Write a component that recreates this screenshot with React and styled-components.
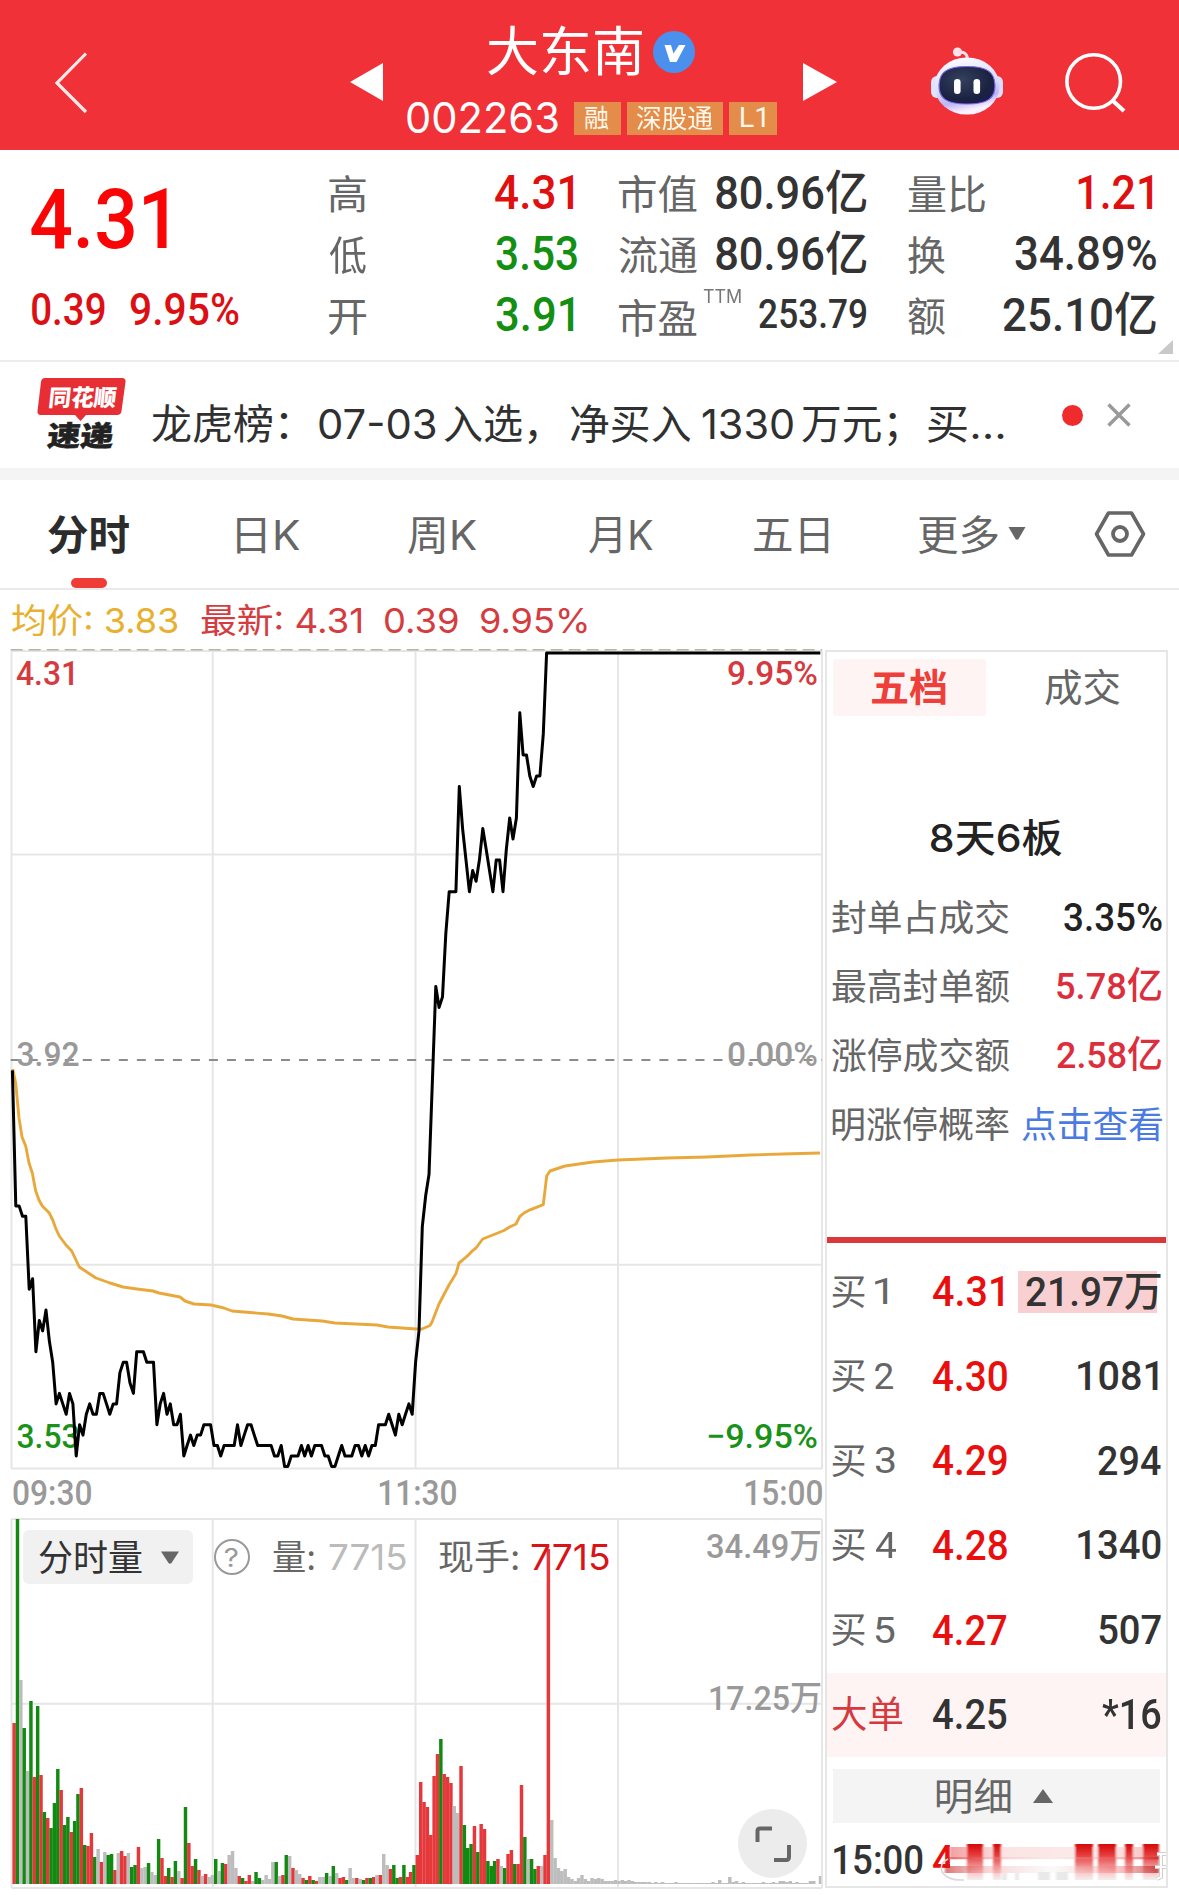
import React from "react";
import styled, { createGlobalStyle, css } from "styled-components";

const DIN = 'Roboto, "Noto Sans CJK SC", sans-serif';
const SANS = 'Inter, "Noto Sans CJK SC", sans-serif';

const GlobalStyle = createGlobalStyle`
  * { box-sizing: border-box; }
  body { margin: 0; background: #fff; font-family: ${SANS}; color: #333; }
  svg { display: block; flex: none; overflow: visible; }
`;

/* ---------- text that is set to an exact ink width ---------- */

const FitBox = styled.div`
  flex: none;
  width: ${(p) => p.$w}px;
  height: ${(p) => Math.round(p.$size * 1.2)}px;
  margin: ${(p) => p.$m || "0"};
  line-height: ${(p) => Math.round(p.$size * 1.2)}px;
  font-family: ${(p) => (p.$din ? DIN : SANS)};
  font-size: ${(p) => p.$size}px;
  font-weight: ${(p) => p.$weight};
  color: ${(p) => p.$color};
  white-space: nowrap;
`;

const FitInk = styled.span`
  display: inline-block;
  transform-origin: 0 50%;
`;

let context;
function inkOf(text, font) {
  if (!context) context = document.createElement("canvas").getContext("2d");
  context.font = font;
  const m = context.measureText(text);
  return { left: m.actualBoundingBoxLeft, width: m.actualBoundingBoxLeft + m.actualBoundingBoxRight };
}

function Fit({ w, size, weight = 400, color = "#333", din, m, children }) {
  const ink = inkOf(children, `${weight} ${size}px ${din ? DIN : SANS}`);
  const k = w / ink.width;
  return (
    <FitBox $w={w} $size={size} $weight={weight} $color={color} $din={din} $m={m}>
      <FitInk style={{ transform: `translateX(${ink.left * k}px) scaleX(${k})` }}>{children}</FitInk>
    </FitBox>
  );
}

/* ---------- header ---------- */

const Page = styled.div`
  width: 1179px;
  height: 1895px;
  overflow: hidden;
  background: #fff;
`;

const Header = styled.header`
  display: flex;
  align-items: center;
  height: 150px;
  padding: 14px 0 0 54px;
  background: #f03137;
`;

const PrevArrow = styled.svg` margin-left: 262px; `;
const NextArrow = styled.svg` margin-left: 26px; `;
const Robot = styled.svg` margin-left: 93px; `;
const SearchIcon = styled.svg` margin-left: 61px; `;

const StockTitle = styled.div`
  display: flex;
  flex-direction: column;
  align-self: flex-start;
  width: 370px;
  margin-left: 24px;
  padding-top: 6px;
`;

const NameRow = styled.div`
  display: flex;
  align-items: center;
  height: 64px;
  margin-left: 81px;
  gap: 11px;
`;

const CodeRow = styled.div`
  display: flex;
  align-items: center;
  height: 68px;
`;

const Tag = styled.div`
  display: flex;
  align-items: center;
  justify-content: center;
  width: ${(p) => p.$w}px;
  height: 33px;
  margin-left: ${(p) => p.$ml}px;
  background: #e48c49;
`;

function TopBar() {
  return (
    <Header>
      <svg width="34" height="60" viewBox="0 0 34 60">
        <polyline points="32,1.5 3,31 32,60" fill="none" stroke="#ffe9e9" strokeWidth="3.2" />
      </svg>
      <PrevArrow width="33" height="38" viewBox="0 0 33 38">
        <path d="M33 0V38L0 19Z" fill="#fff" />
      </PrevArrow>
      <StockTitle>
        <NameRow>
          <Fit w={154} size={53} color="#fff">大东南</Fit>
          <svg width="42" height="42" viewBox="0 0 42 42">
            <circle cx="21" cy="21" r="21" fill="#4b90ec" />
            <path d="M11.500 14H18L20.500 22.500L26 14H32.500L23.500 31H17Z" fill="#fff" />
          </svg>
        </NameRow>
        <CodeRow>
          <Fit w={151} size={42} color="#fff">002263</Fit>
          <Tag $w={47} $ml={15.5}><Fit w={24} size={25} color="#fff7ea">融</Fit></Tag>
          <Tag $w={96} $ml={6}><Fit w={77} size={26} color="#fff7ea">深股通</Fit></Tag>
          <Tag $w={48} $ml={6}><Fit w={24} size={27} color="#fff7ea" din>L1</Fit></Tag>
        </CodeRow>
      </StockTitle>
      <NextArrow width="34" height="38" viewBox="0 0 34 38">
        <path d="M0 0V38L34 19Z" fill="#fff" />
      </NextArrow>
      <Robot width="74" height="70" viewBox="0 0 74 70">
        <defs>
          <linearGradient id="shell" x1="0" y1="0" x2="0.25" y2="1">
            <stop offset="0" stopColor="#ffffff" />
            <stop offset="0.6" stopColor="#d9dcff" />
            <stop offset="0.82" stopColor="#bcb4f6" />
            <stop offset="1" stopColor="#fbf3ff" />
          </linearGradient>
          <radialGradient id="visor" cx="0.4" cy="0.35" r="0.75">
            <stop offset="0" stopColor="#34405f" />
            <stop offset="0.7" stopColor="#1a2240" />
            <stop offset="1" stopColor="#1b1b55" />
          </radialGradient>
        </defs>
        <circle cx="27.5" cy="5" r="4.6" fill="#ffe3ea" />
        <path d="M28 6C33 4 37 6 37.5 12" fill="none" stroke="#ffdfe8" strokeWidth="3" />
        <rect x="1" y="29" width="12" height="22" rx="6" fill="#dfe3fb" />
        <rect x="61" y="29" width="12" height="22" rx="6" fill="#dcdcfb" />
        <ellipse cx="37" cy="39" rx="32.5" ry="28.6" fill="url(#shell)" />
        <path d="M37 19.5C57 19.5 64.5 25 65 38C65.500 51 58 57 37 57C16 57 8.500 51 9 38C9.500 25 17 19.500 37 19.500Z" fill="url(#visor)" stroke="#7b6ce8" strokeWidth="1.2" />
        <rect x="24" y="32" width="6.6" height="15" rx="3.300" fill="#fff" />
        <rect x="43.500" y="32" width="6.600" height="15" rx="3.300" fill="#fff" />
      </Robot>
      <SearchIcon width="62" height="60" viewBox="0 0 62 60">
        <circle cx="28.700" cy="29.500" r="26.800" fill="none" stroke="#fff" strokeWidth="3.600" />
        <path d="M47 48L59 59" stroke="#fff" strokeWidth="4.200" />
      </SearchIcon>
    </Header>
  );
}

/* ---------- quote summary ---------- */

const Quote = styled.section`
  display: flex;
  position: relative;
  height: 212px;
  padding: 12px 0 0 31px;
  border-bottom: 2px solid #ececec;
`;

const PriceBlock = styled.div`
  display: flex;
  flex: none;
  flex-direction: column;
  width: 298px;
  padding-top: 7px;
`;

const ChangeRow = styled.div`
  display: flex;
  gap: 25px;
  margin: 15px 0 0 1px;
`;

const StatColumn = styled.div`
  display: grid;
  flex: none;
  grid-template-rows: repeat(3, 61.3px);
  align-content: start;
  width: 248px;
  margin-right: 41.500px;
  &:last-of-type { margin-right: 0; }
`;

const Stat = styled.div`
  display: flex;
  align-items: center;
  justify-content: space-between;
`;

const Corner = styled.svg`
  position: absolute;
  right: 6px;
  bottom: 6px;
`;

const LABEL = "#666";
const DROP = "4px 0 0 0";

function Summary() {
  return (
    <Quote>
      <PriceBlock>
        <Fit w={136} size={84} weight={500} color="#fa0505" din>4.31</Fit>
        <ChangeRow>
          <Fit w={73} size={43.5} weight={500} color="#dc1014" din>0.39</Fit>
          <Fit w={109} size={43.5} weight={500} color="#dc1014" din>9.95%</Fit>
        </ChangeRow>
      </PriceBlock>
      <StatColumn>
        <Stat><Fit w={37} size={40} color={LABEL} m={DROP}>高</Fit><Fit w={78} size={48} weight={500} color="#e01010" din m="0 4px 0 0">4.31</Fit></Stat>
        <Stat><Fit w={37} size={40} color={LABEL} m={DROP}>低</Fit><Fit w={81} size={48} weight={500} color="#138f13" din>3.53</Fit></Stat>
        <Stat><Fit w={37} size={40} color={LABEL} m={DROP}>开</Fit><Fit w={77} size={48} weight={500} color="#138f13" din m="0 4px 0 0">3.91</Fit></Stat>
      </StatColumn>
      <StatColumn>
        <Stat><Fit w={78} size={40} color={LABEL} m={DROP}>市值</Fit><Fit w={150.5} size={47} weight={500} din>80.96亿</Fit></Stat>
        <Stat><Fit w={78} size={40} color={LABEL} m={DROP}>流通</Fit><Fit w={150.5} size={47} weight={500} din>80.96亿</Fit></Stat>
        <Stat>
          <Fit w={78} size={40} color={LABEL} m="8px 0 0 0">市盈</Fit>
          <Fit w={38} size={18} color="#777" m="-36px 12px 0 0">TTM</Fit>
          <Fit w={107.5} size={40} weight={500} din>253.79</Fit>
        </Stat>
      </StatColumn>
      <StatColumn>
        <Stat><Fit w={77} size={40} color={LABEL} m={DROP}>量比</Fit><Fit w={74} size={48} weight={500} color="#e01010" din m="0 4px 0 0">1.21</Fit></Stat>
        <Stat><Fit w={37} size={40} color={LABEL} m={DROP}>换</Fit><Fit w={141.5} size={48} weight={500} din>34.89%</Fit></Stat>
        <Stat><Fit w={37} size={40} color={LABEL} m={DROP}>额</Fit><Fit w={153} size={47} weight={500} din>25.10亿</Fit></Stat>
      </StatColumn>
      <Corner width="15" height="14" viewBox="0 0 15 14"><path d="M15 0V14H0Z" fill="#c9c9c9" /></Corner>
    </Quote>
  );
}

/* ---------- news strip ---------- */

const News = styled.section`
  display: flex;
  align-items: center;
  height: 118px;
  padding-left: 36px;
  border-bottom: 12px solid #f4f4f4;
`;

const Headline = styled.div`
  display: flex;
  width: 852px;
  margin: 18px 0 0 24px;
`;

const Dot = styled.span`
  width: 21px;
  height: 21px;
  margin: 0 0 0 58px;
  border-radius: 50%;
  background: #f02b2d;
`;

const CloseIcon = styled.svg` margin: 0 0 0 24px; `;

function NewsStrip() {
  const ink = "#303030";
  return (
    <News>
      <svg width="92" height="80" viewBox="0 0 92 80">
        <path d="M9 3H86Q90 3 89.500 7L85.500 36Q85 40 81 40H50L44.500 46L39 40H5Q1 40 1.500 36L5 7Q5.500 3 9 3Z" fill="#e62e34" />
        <text x="15" y="31" transform="skewX(-6)" fontFamily={SANS} fontWeight="900" fontSize="23" fill="#fff" textLength="68" lengthAdjust="spacingAndGlyphs">同花顺</text>
        <text x="18" y="71" transform="skewX(-6)" fontFamily={SANS} fontWeight="900" fontSize="28" fill="#222" stroke="#222" strokeWidth="0.500" textLength="66" lengthAdjust="spacingAndGlyphs">速递</text>
      </svg>
      <Headline>
        <Fit w={136} size={40.5} color={ink}>龙虎榜：</Fit>
        <Fit w={116.5} size={40.5} color={ink} m="0 0 0 31px">07-03</Fit>
        <Fit w={93} size={40.5} color={ink} m="0 0 0 8.500px">入选，</Fit>
        <Fit w={121} size={40.5} color={ink} m="0 0 0 32.500px">净买入</Fit>
        <Fit w={91.500} size={40.5} color={ink} m="0 0 0 11px">1330</Fit>
        <Fit w={94.500} size={40.5} color={ink} m="0 0 0 8.500px">万元；</Fit>
        <Fit w={76} size={40.5} color={ink} m="0 0 0 32px">买...</Fit>
      </Headline>
      <Dot />
      <CloseIcon width="24" height="24" viewBox="0 0 24 24">
        <path d="M1.500 1.500L22.500 22.500M22.500 1.500L1.500 22.500" stroke="#999" strokeWidth="3.400" />
      </CloseIcon>
    </News>
  );
}

/* ---------- period tabs ---------- */

const Tabs = styled.nav`
  display: flex;
  align-items: center;
  height: 110px;
  border-bottom: 2px solid #eaeaea;
`;

const Tab = styled.div`
  display: flex;
  align-items: center;
  position: relative;
  height: 108px;
  margin-left: ${(p) => p.$ml}px;
  padding-top: 3px;
  gap: 10px;
  ${(p) => p.$active && css`
    &::after {
      content: "";
      position: absolute;
      left: 23px;
      bottom: 0;
      width: 36px;
      height: 10px;
      border-radius: 5px;
      background: #f03c37;
    }
  `}
`;

const Caret = styled.svg` margin-top: -4px; `;
const HexIcon = styled.svg` margin-left: 68px; `;

function PeriodTabs() {
  return (
    <Tabs>
      <Tab $ml={47.5} $active><Fit w={81} size={41} weight={600} color="#2c2c2c">分时</Fit></Tab>
      <Tab $ml={108.5}><Fit w={63} size={41} color={LABEL}>日K</Fit></Tab>
      <Tab $ml={107.5}><Fit w={68.500} size={41} color={LABEL}>周K</Fit></Tab>
      <Tab $ml={112.5}><Fit w={64} size={41} color={LABEL}>月K</Fit></Tab>
      <Tab $ml={101.5}><Fit w={75} size={41} color={LABEL}>五日</Fit></Tab>
      <Tab $ml={88.500}>
        <Fit w={80} size={41} color={LABEL}>更多</Fit>
        <Caret width="18" height="13" viewBox="0 0 18 13"><path d="M0.500 0H17.500L10.500 12Q9 13.500 7.500 12Z" fill="#666" /></Caret>
      </Tab>
      <HexIcon width="52" height="46" viewBox="0 0 52 46">
        <path d="M14.500 2H37.500L49.500 23L37.500 44H14.500L2.500 23Z" fill="none" stroke="#666" strokeWidth="3.600" strokeLinejoin="round" />
        <circle cx="26" cy="23" r="7" fill="none" stroke="#666" strokeWidth="3.800" />
      </HexIcon>
    </Tabs>
  );
}

const Legend = styled.div`
  display: flex;
  align-items: center;
  height: 54px;
  padding: 6px 0 0 11.500px;
`;

function LegendRow() {
  return (
    <Legend>
      <Fit w={166} size={34.5} color="#e8b02e">均价: 3.83</Fit>
      <Fit w={160} size={34.5} color="#d43c40" m="0 0 0 23px">最新: 4.31</Fit>
      <Fit w={73} size={34.5} color="#d43c40" m="0 0 0 24px">0.39</Fit>
      <Fit w={105.5} size={34.5} color="#d43c40" m="0 0 0 23.500px">9.95%</Fit>
    </Legend>
  );
}

/* ---------- price chart ---------- */

const MINUTE = 3.36;
const X0 = 12.4;
const MID = 1060;
const TOP = 653;

/* one entry a minute, in cents above or below the previous close */
const ticks = [
  -1, -14, -14, -15, -15, -22, -21, -28, -25, -26, -24, -27, -29, -33, -32, -33, -34, -32, -33, -38,
  -35, -36, -34, -33, -34, -34, -32, -32, -33, -34, -33, -33, -30, -29, -29, -31, -32, -28, -28, -28,
  -29, -29, -29, -35, -33, -32, -34, -33, -35, -35, -34, -38, -37, -36, -37, -36, -36, -35, -35, -35,
  -37, -37, -38, -37, -37, -37, -37, -35, -37, -36, -35, -35, -36, -37, -37, -37, -37, -37, -38, -38,
  -37, -39, -39, -38, -38, -38, -37, -38, -37, -38, -37, -37, -37, -38, -38, -39, -39, -38, -37, -38,
  -38, -38, -37, -37, -38, -37, -38, -37, -37, -35, -35, -35, -34, -35, -36, -34, -35, -34, -33, -34,
  -29, -26, -16, -13, -11, -2, 7, 5, 6, 12, 16, 16, 16, 26, 22, 19, 16, 18, 17, 19,
  22, 20, 18, 16, 19, 19, 16, 20, 23, 21, 23, 33, 29, 29, 27, 26, 27, 27, 31, 39,
];

const priceY = (t) => Math.max(TOP, MID - t * (t > 0 ? 10.52 : 10.42));

const pricePoints = ticks
  .map((t, i) => `${(X0 + i * MINUTE).toFixed(1)},${priceY(t).toFixed(1)}`)
  .concat(`820.3,${TOP}`)
  .join(" ");

const averagePoints =
  "12.7,1069 15.7,1083 19,1118 22,1137 25.7,1146 29,1163 32.3,1173 35.7,1191 39,1200 42.3,1206 49.3,1213 52.7,1220 56,1229 59.3,1236 66,1245 71.7,1251 79.3,1267 88.3,1273 96,1278 110,1283 123,1287 137,1289 153,1291 159,1293 180,1297 185,1301 194,1304 211,1305 224,1308 232,1311 268,1314 282,1316 293,1319 322,1321 335,1323 377,1325 388,1327 416,1329 422,1329 430,1325.5 432,1322 439,1304 449,1285 456,1273.6 459,1263 462.7,1260 467.7,1255.7 472.7,1250.6 476,1248 482.7,1239 492.7,1235 504,1230.5 510,1226.8 516,1224 519.7,1216.7 524,1213 530,1209.8 543.3,1204.7 546.7,1176 550,1171 565,1166 593,1162 618,1160 667,1158 707,1157 750,1155 783,1154 820,1153";

const GRID = "#e6e6e6";

const ChartText = styled.text`
  font-family: ${DIN};
  font-size: 34px;
  font-weight: 500;
`;

function ChartLabel({ x, y, w, color, children }) {
  return (
    <ChartText x={x} y={y} fill={color} textLength={w} lengthAdjust="spacingAndGlyphs">
      {children}
    </ChartText>
  );
}

function PriceChart() {
  return (
    <svg width="824" height="826" viewBox="0 644 824 826">
      <g stroke={GRID} strokeWidth="2">
        <path d="M11.500 650V1469M212.700 650V1469M415.500 650V1469M618 650V1469M822 650V1469" />
        <path d="M11.500 651H822M11.500 854.500H822M11.500 1264.700H822M11.500 1468.500H822" />
      </g>
      <path d="M10.700 649.700H822" stroke="#b5b5a4" strokeWidth="1.600" strokeDasharray="12 6" />
      <path d="M10.700 1060H822" stroke="#8c8c8c" strokeWidth="2" strokeDasharray="9 9.020" />
      <ChartLabel x={16} y={685} w={63} color="#d43a3e">4.31</ChartLabel>
      <ChartLabel x={727} y={685} w={91} color="#d43a3e">9.95%</ChartLabel>
      <ChartLabel x={16.5} y={1066} w={63} color="#999">3.92</ChartLabel>
      <ChartLabel x={727} y={1066} w={91} color="#999">0.00%</ChartLabel>
      <ChartLabel x={16.5} y={1447.5} w={63} color="#1a921a">3.53</ChartLabel>
      <ChartLabel x={706} y={1447.5} w={112} color="#1a921a">−9.95%</ChartLabel>
      <polyline points={averagePoints} fill="none" stroke="#e9a83c" strokeWidth="2.900" strokeLinejoin="round" />
      <polyline points={pricePoints} fill="none" stroke="#000" strokeWidth="3" strokeLinejoin="round" />
    </svg>
  );
}

const Axis = styled.div`
  display: flex;
  align-items: center;
  justify-content: space-between;
  height: 48px;
  padding: 0 2px 2px 12.700px;
`;

/* ---------- volume chart ---------- */

/* minute bars: colour letter (r rise, g fall, y flat) and bar height */
const opening =
  "r161 g365 y204 g156 y113 g183 r107 g178 r109 g72 r66 g56 g81 g115 r94 g59 g67 r52 g63 g90 r96 g39 r38 r51 g27 y35 r22 y32 g29 g30 r14 y31 r33 r28 y31 g17 g19 r37 y16 y17 g21 y12 y9 g45 r26 r8 g16 r7 g23 y13 r6 g77 r41 r18 g25 r14 y8 r10 y7 y9 g25 y13 g21 r20 y29 y33 y16 r8 g6 r3 r9 y3 g12 g6 y4 y9 y5 y22 g22 y8 r9 g29 y28 r16 y14 y10 r6 g4 r8 g4 r3 y7 y7 g11 y8 g18 y11 r6 r7 g4 y16 y6 r6 y5 g4 r6 g6 r7 y9 r9 y30 y19 r15 g19 g6 r7 g19 r7 r12 g19";
const afternoon =
  "r29 r102 r82 r77 r49 r108 r130 g145 r110 r107 r101 y78 y71 r118 g59 g36 g40 r58 g32 r60 r55 g23 g18 g23 r25 y18 g16 r30 r34 g20 r20 r99 g47 y25 g25 g15 r18 y18 r29 r335 y64 y26 y16 y13 y15 y7 y5 y3 y6 y9 y5 y3 y6 y5 y6 y5 y3 y3 y3 y4 y3 y4 y3 y4 y3 y2 y2 y2 y2 y2 y1 y2 y1 y2 y1 y1 y1 y2 y1 y1 y1 y1 y1 y1 y1 y1 y1 y1 y2 y1 y4 y1 y1 y7 y2 y3 y1 y2 y1 y1 y1 y1 y1 y2 y1 y1 y2 y1 y3 y3 y2 y3 y1 y2 y1 y1 y1 y3 y3 y0 y8";

const bars = `${opening} ${afternoon}`.split(" ").map((b) => ({ tone: b[0], h: Number(b.slice(1)) }));
const TONES = { r: "#e5383b", g: "#128a12", y: "#bdbdbd" };

const VolumePane = styled.div` position: relative; `;

const VolumeTools = styled.div`
  position: absolute;
  left: 22.700px;
  top: 12px;
  display: flex;
  align-items: center;
  height: 54px;
`;

const Chip = styled.div`
  display: flex;
  align-items: center;
  gap: 19px;
  width: 170px;
  height: 54px;
  padding-left: 16px;
  border-radius: 6px;
  background: #f1f1f1;
`;

const Help = styled.div`
  display: flex;
  align-items: center;
  justify-content: center;
  width: 36px;
  height: 36px;
  margin-left: 21px;
  border: 2.500px solid #999;
  border-radius: 50%;
`;

const Expand = styled.div`
  position: absolute;
  left: 738px;
  top: 291px;
  display: flex;
  align-items: center;
  justify-content: center;
  width: 69px;
  height: 69px;
  border-radius: 50%;
  background: #ececec;
`;

const BASE = 1884;

function VolumeBars() {
  return (
    <>
      {bars.map((b, i) => {
        const x = X0 + i * MINUTE;
        return <rect key={i} x={x} y={BASE - b.h} width={i === 240 ? 2.4 : MINUTE + 0.1} height={b.h} fill={TONES[b.tone]} />;
      })}
    </>
  );
}

function VolumeChart() {
  return (
    <VolumePane>
      <VolumeTools>
        <Chip>
          <Fit w={103} size={36} color="#333" m="2px 0 0 0">分时量</Fit>
          <svg width="18" height="13" viewBox="0 0 18 13"><path d="M0 0.500H18L10.500 12Q9 13.500 7.500 12Z" fill="#666" /></svg>
        </Chip>
        <Help><Fit w={12.500} size={26} color="#999">?</Fit></Help>
        <Fit w={41} size={35.5} color={LABEL} m="0 0 0 23px">量:</Fit>
        <Fit w={77} size={35.5} color="#bbb" m="0 0 0 15px">7715</Fit>
        <Fit w={79} size={35.5} color={LABEL} m="0 0 0 33px">现手:</Fit>
        <Fit w={78} size={35.5} color="#d81418" m="0 0 0 13px">7715</Fit>
      </VolumeTools>
      <svg width="824" height="371" viewBox="0 1518 824 371">
        <g stroke={GRID} strokeWidth="2">
          <path d="M11.500 1519V1888M212.700 1519V1888M415.500 1519V1888M618 1519V1888M822 1519V1888" />
          <path d="M11.500 1519H822M11.500 1703.700H822M11.500 1888H822" />
        </g>
        <VolumeBars />
        <ChartLabel x={706} y={1557.5} w={116} color="#999">34.49万</ChartLabel>
        <ChartLabel x={708} y={1710} w={114} color="#999">17.25万</ChartLabel>
      </svg>
      <Expand>
        <svg width="36" height="36" viewBox="0 0 36 36">
          <path d="M2.500 16V5Q2.500 2.500 5 2.500H17M34 19V31Q34 34 31 34H19" fill="none" stroke="#666" strokeWidth="4" />
        </svg>
      </Expand>
    </VolumePane>
  );
}

/* ---------- order book ---------- */

const Body = styled.main` display: flex; `;
const ChartColumn = styled.div`
  flex: none;
  width: 824px;
`;

const Book = styled.aside`
  display: flex;
  flex: none;
  flex-direction: column;
  width: 343px;
  height: 1238px;
  margin: 6px 0 0 0.500px;
  border: 2px solid #e6e6e6;
`;

const BookTabs = styled.div`
  display: flex;
  height: 57px;
  margin: 7px 0 0 6px;
`;

const BookTab = styled.div`
  display: flex;
  flex: none;
  align-items: center;
  justify-content: center;
  width: ${(p) => p.$w}px;
  border-radius: 3px;
  background: ${(p) => (p.$active ? "#fef4f4" : "transparent")};
`;

const Streak = styled.div`
  display: flex;
  justify-content: center;
  margin-top: 99px;
`;

const Facts = styled.div`
  display: grid;
  grid-template-rows: repeat(4, 69px);
  height: 356px;
  margin-top: 23px;
  padding: 0 4px 0 5px;
`;

const Between = styled.div`
  display: flex;
  align-items: center;
  justify-content: space-between;
`;

const LimitLine = styled.div`
  flex: none;
  height: 6px;
  background: #da373a;
`;

const Order = styled.div`
  display: grid;
  grid-template-columns: 101px 1fr;
  align-items: center;
  flex: none;
  height: 84.600px;
  padding: 0 5px;
  background: ${(p) => (p.$big ? "#fef4f4" : "transparent")};
`;

const Orders = styled.div`
  padding-top: 7px;
`;

const Level = styled.div`
  display: flex;
  align-items: center;
  gap: 10px;
`;

const Quantity = styled.div`
  display: flex;
  align-items: center;
  justify-content: flex-end;
  height: 42px;
  width: 143px;
  padding-right: ${(p) => p.$pr || 0}px;
  background: ${(p) => (p.$lit ? "linear-gradient(to right, #f9d0d2 139px, transparent 139px)" : "none")};
`;

const DetailBar = styled.div`
  display: flex;
  align-items: center;
  flex: none;
  height: 54px;
  margin: 12px 6px 0 6px;
  padding-left: 104px;
  gap: 22px;
  background: #f4f4f4;
`;

const Trade = styled.div`
  display: flex;
  align-items: center;
  position: relative;
  height: 52px;
  margin-top: 11px;
  padding-left: 7px;
  gap: 10px;
`;

const Veil = styled.svg`
  position: absolute;
  left: 105px;
  top: 0;
`;

const orders = [
  ["1", 13, "4.31", 70, "21.97万", 135, true, 0],
  ["2", 19, "4.30", 74, "1081", 80, false, 3],
  ["3", 20, "4.29", 74, "294", 63, false, 0],
  ["4", 21, "4.28", 74, "1340", 83, false, 0],
  ["5", 20, "4.27", 74, "507", 62, false, 0],
];

function OrderBook() {
  return (
    <Book>
      <BookTabs>
        <BookTab $w={153} $active><Fit w={75} size={38} weight={600} color="#ef3f3a">五档</Fit></BookTab>
        <BookTab $w={193}><Fit w={75} size={38} color={LABEL}>成交</Fit></BookTab>
      </BookTabs>
      <Streak><Fit w={131} size={38.5} weight={500} color="#222">8天6板</Fit></Streak>
      <Facts>
        <Between><Fit w={177} size={36} color={LABEL}>封单占成交</Fit><Fit w={98} size={38} weight={500} color="#222" din>3.35%</Fit></Between>
        <Between><Fit w={177} size={36} color={LABEL}>最高封单额</Fit><Fit w={105} size={37} weight={500} color="#dc2f3e" din>5.78亿</Fit></Between>
        <Between><Fit w={177} size={36} color={LABEL}>涨停成交额</Fit><Fit w={105} size={37} weight={500} color="#dc2f3e" din>2.58亿</Fit></Between>
        <Between><Fit w={177} size={36} color={LABEL}>明涨停概率</Fit><Fit w={140} size={36} color="#4b7be0">点击查看</Fit></Between>
      </Facts>
      <LimitLine />
      <Orders>
        {orders.map(([n, nw, price, pw, qty, qw, lit, pr]) => (
          <Order key={n}>
            <Level><Fit w={33} size={36} color={LABEL}>买</Fit><Fit w={nw} size={37} color={LABEL} din>{n}</Fit></Level>
            <Between>
              <Fit w={pw} size={42} weight={500} color="#ea0f0f" din>{price}</Fit>
              <Quantity $lit={lit} $pr={pr}><Fit w={qw} size={41} weight={500} din>{qty}</Fit></Quantity>
            </Between>
          </Order>
        ))}
      </Orders>
      <Order $big>
        <Fit w={71} size={37} color="#d63a3e">大单</Fit>
        <Between>
          <Fit w={74} size={42} weight={500} din>4.25</Fit>
          <Quantity><Fit w={59} size={42} weight={500} din>*16</Fit></Quantity>
        </Between>
      </Order>
      <DetailBar>
        <Fit w={74} size={38} color={LABEL}>明细</Fit>
        <svg width="20" height="14" viewBox="0 0 20 14"><path d="M10 0L20 14H0Z" fill="#666" /></svg>
      </DetailBar>
      <Trade>
        <Fit w={89} size={41} weight={500} din>15:00</Fit>
        <Fit w={70} size={41} weight={500} color="#ea0f0f" din>4.31</Fit>
        <Fit w={84} size={41} weight={500} color="#ea0f0f" din m="0 0 0 63px">7715</Fit>
        <Veil width="234" height="50" viewBox="932 1835 234 50">
          <defs>
            <linearGradient id="fade" x1="0" y1="0" x2="0" y2="1">
              <stop offset="0" stopColor="#d40a0a" />
              <stop offset="0.3" stopColor="#e63a3a" />
              <stop offset="0.6" stopColor="#f08a8a" />
              <stop offset="0.85" stopColor="#fbd3d3" />
              <stop offset="1" stopColor="#f1eeee" />
            </linearGradient>
            <linearGradient id="smear" x1="0" y1="0" x2="1" y2="0">
              <stop offset="0" stopColor="#c01818" stopOpacity="0.85" />
              <stop offset="0.2" stopColor="#e88" stopOpacity="0.5" />
              <stop offset="0.5" stopColor="#eee" stopOpacity="0.4" />
              <stop offset="0.8" stopColor="#e66" stopOpacity="0.5" />
              <stop offset="1" stopColor="#b01010" stopOpacity="0.9" />
            </linearGradient>
            <linearGradient id="blush" x1="0" y1="0" x2="1" y2="0">
              <stop offset="0" stopColor="#f3a0a0" />
              <stop offset="0.25" stopColor="#fbe3e3" />
              <stop offset="0.75" stopColor="#fcecec" />
              <stop offset="1" stopColor="#f6b8b8" />
            </linearGradient>
            <filter id="soften" x="-5%" y="-5%" width="110%" height="110%">
              <feGaussianBlur stdDeviation="1.200 0.600" />
            </filter>
          </defs>
          <path d="M950 1842H1160V1884H940V1869H950Z" fill="#fff" />
          <g filter="url(#soften)">
            <rect x="950" y="1848" width="209" height="12" fill="url(#blush)" />
            <g fill="url(#fade)">
              <rect x="967" y="1845" width="16" height="36" />
              <rect x="993" y="1845" width="8" height="36" />
              <rect x="1075" y="1845" width="18" height="36" />
              <rect x="1098" y="1845" width="18" height="36" />
              <rect x="1125" y="1845" width="8" height="36" />
              <rect x="1143" y="1845" width="16" height="36" />
            </g>
            <rect x="946" y="1858" width="214" height="2.500" fill="url(#smear)" opacity="0.500" />
            <rect x="945" y="1867" width="214" height="7" fill="url(#smear)" opacity="0.700" />
            <g fill="#e9e9e9">
              <rect x="1002" y="1874" width="5" height="7" />
              <rect x="1015" y="1874" width="4" height="7" />
              <rect x="1038" y="1873" width="12" height="8" />
              <rect x="1056" y="1873" width="12" height="8" />
            </g>
          </g>
          <path d="M948 1860Q939 1864 942 1873Q948 1882 964 1881" fill="none" stroke="#d8d8d8" strokeWidth="1.500" />
          <path d="M1157 1855H1166M1155 1868H1166M1161 1855V1878L1157 1880" fill="none" stroke="#cfcfcf" strokeWidth="4" />
          <path d="M1157 1855H1166M1155 1868H1166M1161 1855V1878L1157 1880" fill="none" stroke="#fff" strokeWidth="2" />
        </Veil>
      </Trade>
    </Book>
  );
}

export default function App() {
  return (
    <Page>
      <GlobalStyle />
      <TopBar />
      <Summary />
      <NewsStrip />
      <PeriodTabs />
      <LegendRow />
      <Body>
        <ChartColumn>
          <PriceChart />
          <Axis>
            <Fit w={78} size={34.5} weight={500} color="#999" din>09:30</Fit>
            <Fit w={77} size={34.5} weight={500} color="#999" din>11:30</Fit>
            <Fit w={77} size={34.5} weight={500} color="#999" din>15:00</Fit>
          </Axis>
          <VolumeChart />
        </ChartColumn>
        <OrderBook />
      </Body>
    </Page>
  );
}
